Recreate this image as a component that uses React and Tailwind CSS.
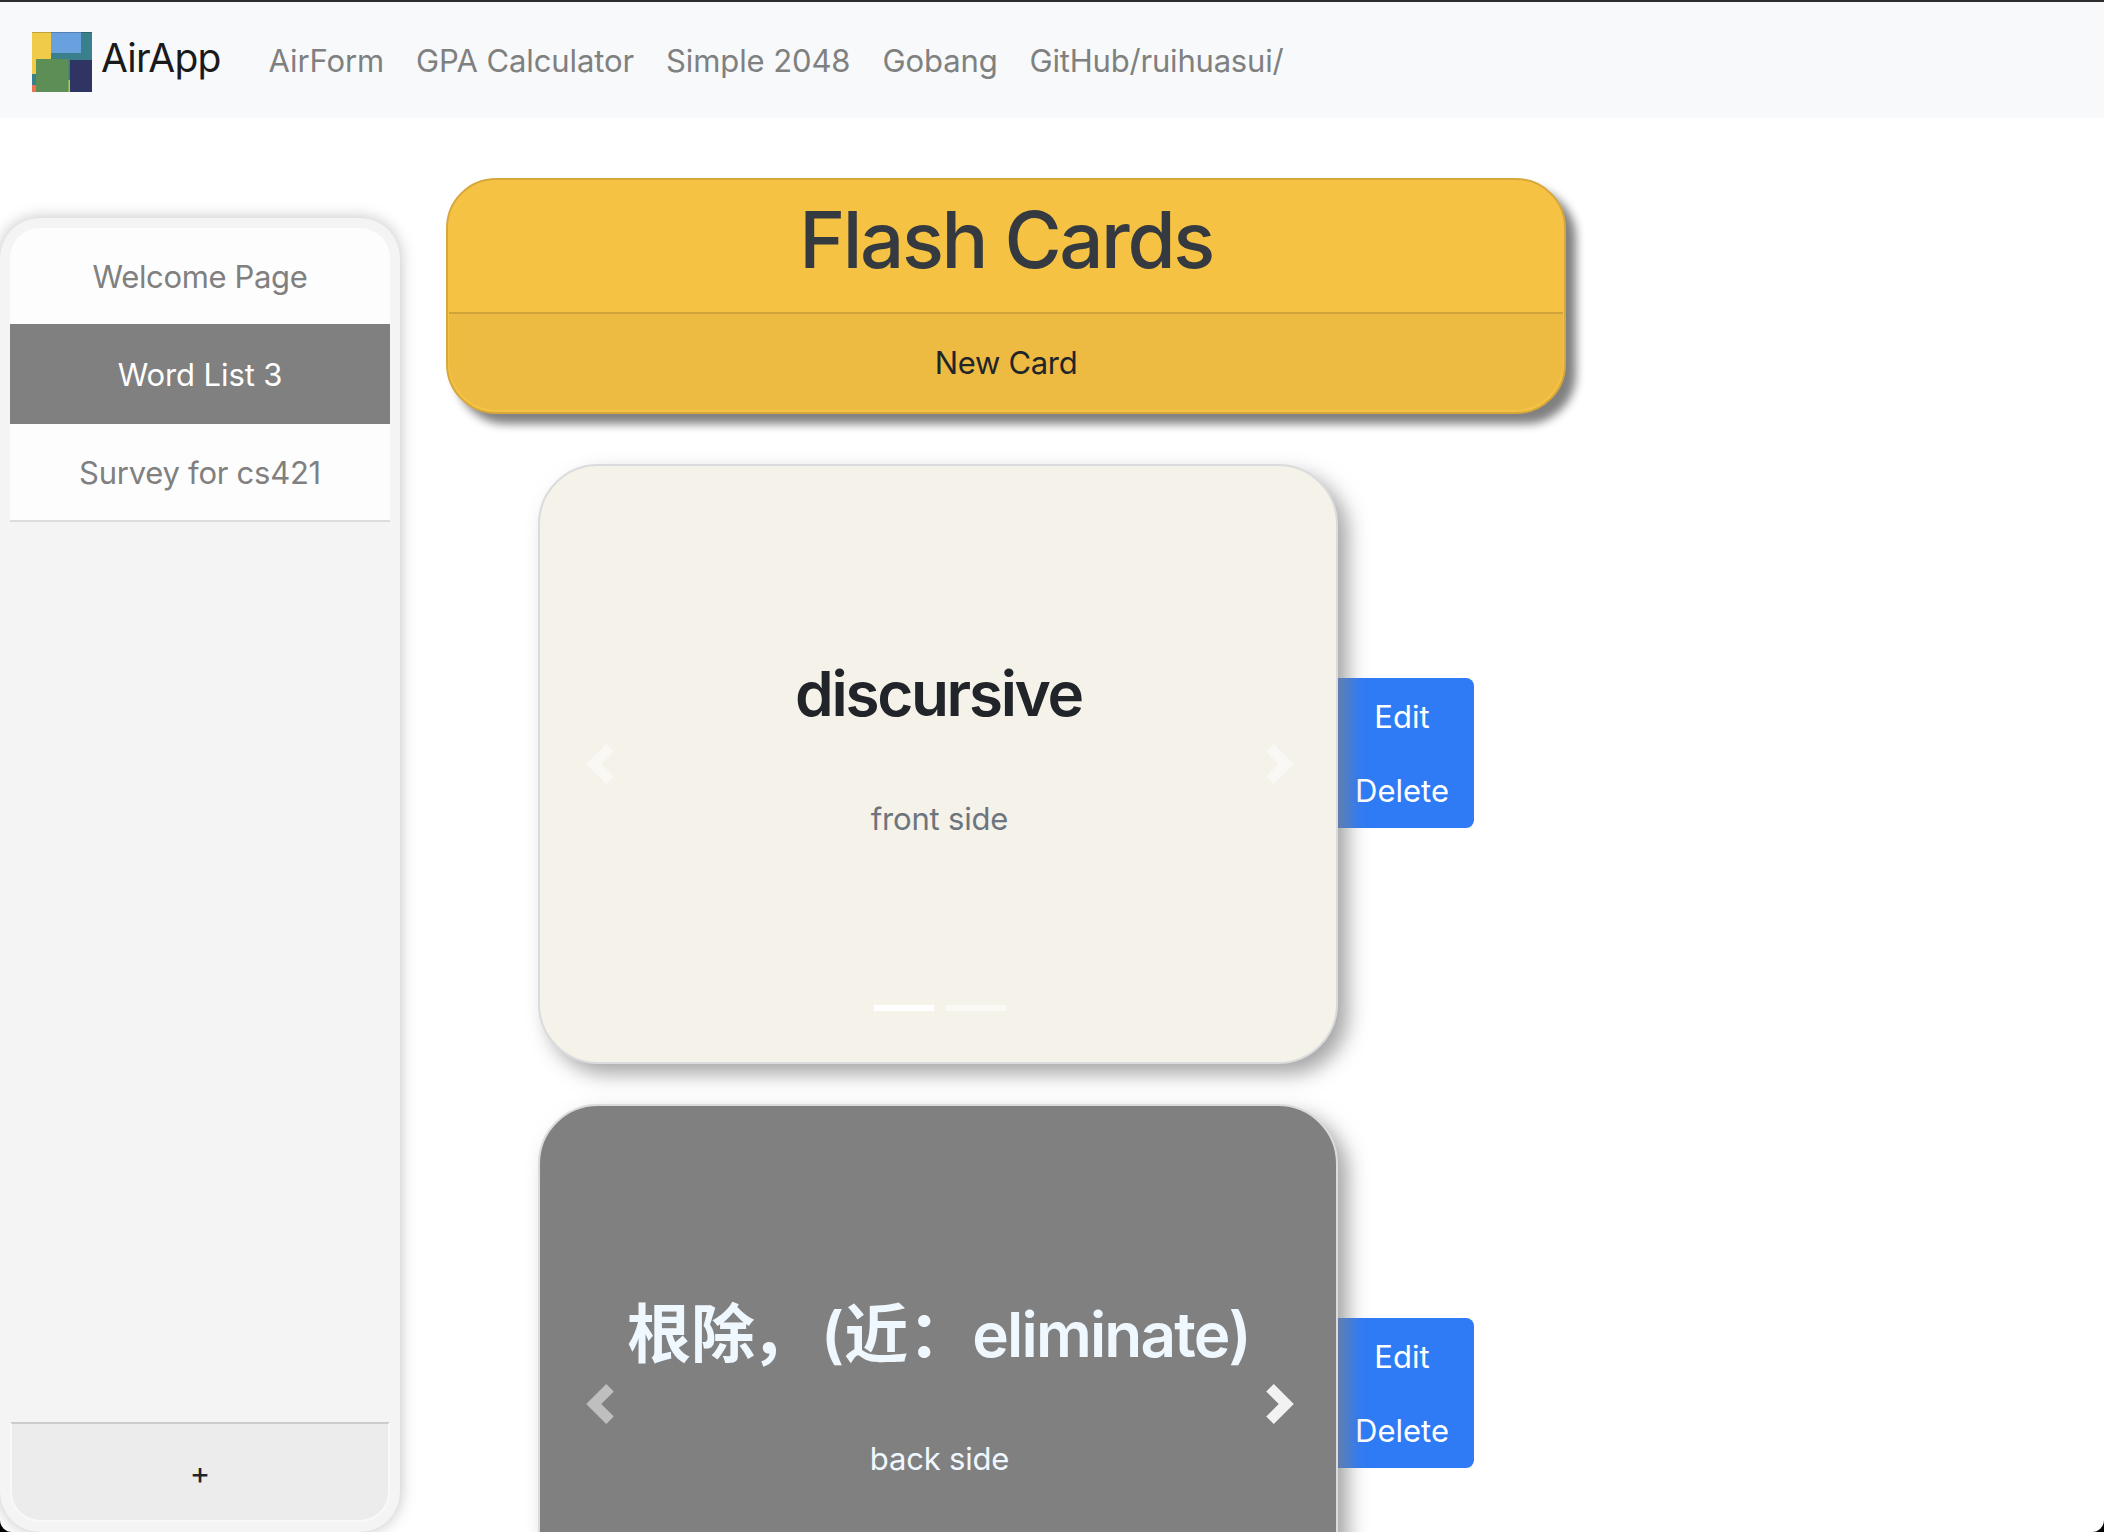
const sans = "font-['Inter','Noto_Sans_CJK_SC',sans-serif]";

function Logo() {
  return (
    <svg viewBox="0 0 60 60" className="h-[60px] w-[60px] shrink-0">
      <rect width="60" height="60" fill="#3a808c" />
      <rect width="19" height="42" fill="#efcb49" />
      <rect x="19" width="30" height="21" fill="#68a1dd" />
      <rect y="53" width="4" height="7" fill="#ee7350" />
      <rect x="36" y="48" width="2" height="12" fill="#a5cf63" />
      <rect x="4" y="27" width="32.5" height="33" fill="#5d8e55" />
      <rect x="38" y="28" width="22" height="32" fill="#303463" />
      <rect width="60" height="1" fill="#000" opacity="0.2" />
    </svg>
  );
}

const links = ["AirForm", "GPA Calculator", "Simple 2048", "Gobang", "GitHub/ruihuasui/"];

function Chevron({ dir, className }) {
  return (
    <svg viewBox="0 0 8 8" className={"absolute top-[278px] h-10 w-10 " + className} fill="#fff">
      {dir === "prev" ? (
        <path d="M5.25 0l-4 4 4 4 1.5-1.5L4.25 4l2.5-2.5L5.25 0z" />
      ) : (
        <path d="M2.75 0l-1.5 1.5L3.75 4l-2.5 2.5L2.75 8l4-4-4-4z" />
      )}
    </svg>
  );
}

function Card({ tone, sideTone, title, side, hover }) {
  return (
    <div className="flex items-center">
      <div
        className={
          "relative z-10 h-[600px] w-[800px] shrink-0 rounded-[60px] border-2 border-[#dadbdc] text-center shadow-[10px_10px_20px_rgba(128,128,128,0.7)] " +
          tone
        }
      >
        <h2 className="mt-[190px] h-[76px] pl-px text-[62px] leading-[76px] font-semibold whitespace-nowrap">{title}</h2>
        <p className={"mt-[67px] pl-[3px] text-[31px] leading-10 tracking-[-0.2px] " + sideTone}>{side}</p>
        <Chevron dir="prev" className="left-10 opacity-50" />
        <Chevron dir="next" className={hover ? "left-[720px] opacity-90" : "left-[720px] opacity-50"} />
        <div className="absolute top-[539px] left-[334px] flex gap-3">
          <div className="h-1.5 w-[60px] bg-white" />
          <div className="h-1.5 w-[60px] bg-white/50" />
        </div>
      </div>
      <div className="mt-[-22px] flex h-[150px] w-[136px] flex-col rounded-r-lg bg-[#2f7bf6] pt-px text-center text-[31px] leading-[76px] text-white">
        <button className="h-[74px] pr-2">Edit</button>
        <button className="h-[74px] pr-2">Delete</button>
      </div>
    </div>
  );
}

export default function App() {
  return (
    <div className="bg-black">
      <div className={"flex h-[1532px] w-[2104px] flex-col overflow-hidden rounded-b-[12px] bg-white text-[#212529] " + sans}>
        <nav className="flex h-[118px] shrink-0 items-center border-t-2 border-[#2d2d2f] bg-[#f8f9fb] pt-1 pl-8">
          <Logo />
          <span className="mb-[7px] ml-[9px] text-[39px] tracking-[-0.8px] text-[#1a1a1a]">AirApp</span>
          <div className="mb-px ml-12 flex gap-8 text-[31px] tracking-[-0.1px] text-[#7f8080]">
            {links.map((l) => (
              <a key={l} className="last:tracking-[-0.2px]">{l}</a>
            ))}
          </div>
        </nav>
        <div className="flex">
          <aside className="mt-[100px] flex h-[1314px] w-[400px] shrink-0 flex-col rounded-[40px] bg-[#f4f4f4] p-2.5 text-center text-[31px] text-[#808080] shadow-[0_0_16px_rgba(0,0,0,0.25)]">
            <div className="h-24 rounded-t-[30px] bg-[#fdfdfd] leading-[97px] tracking-[-0.35px]">Welcome Page</div>
            <div className="h-[100px] bg-[#808080] leading-[101px] tracking-[-0.1px] text-white">Word List 3</div>
            <div className="h-[98px] border-b-2 border-[#dcdcdc] bg-[#fdfdfd] leading-[97px] tracking-[-0.25px]">Survey for cs421</div>
            <button className="mt-auto h-[100px] rounded-b-[30px] border-2 border-[#f9f9f9] border-t-[#cccccc] bg-[#ececec] pt-0.5 text-[#212529]">+</button>
          </aside>
          <main className="ml-[46px] pt-[60px]">
            <header className="h-[236px] w-[1120px] rounded-[50px] border-2 border-[#d6a83c] bg-[#f5c244] text-center shadow-[10px_10px_10px_#808080]">
              <h1 className="h-[132px] text-[78px] leading-[120px] font-medium tracking-[-2.4px] text-[#343a40]">Flash Cards</h1>
              <button className="mx-px h-[98px] w-[1114px] rounded-b-[48px] border-t-2 border-[#cfa23a] bg-[#edbb42] pt-0.5 text-[31px] tracking-[-0.3px]">New Card</button>
            </header>
            <div className="mt-[50px] ml-[92px] flex flex-col gap-10">
              <Card
                tone="bg-[#f5f2ea] text-[#212529]"
                sideTone="text-[#6c757d]"
                title={<span className="tracking-[-2.3px]">discursive</span>}
                side="front side"
              />
              <Card
                tone="bg-[#808080] text-[#f0f8ff]"
                sideTone="text-[#f0f8ff]"
                hover
                title={
                  <>
                    <span className="text-[64px]">根除</span>
                    <span className="relative -left-1 text-[64px]">，</span>
                    <span className="ml-0.5">(</span>
                    <span className="text-[64px]">近：</span>
                    <span className="tracking-[-1.8px]">eliminate)</span>
                  </>
                }
                side="back side"
              />
            </div>
          </main>
        </div>
      </div>
    </div>
  );
}
